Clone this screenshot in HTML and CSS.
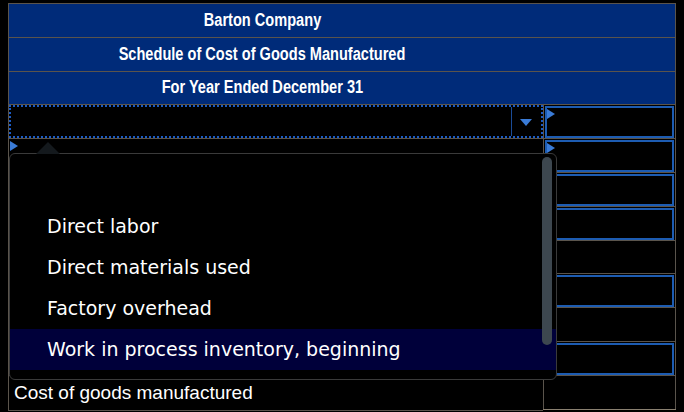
FILE: index.html
```html
<!DOCTYPE html>
<html>
<head>
<meta charset="utf-8">
<link rel="stylesheet" href="styles.css">
</head>
<body>
<div class="sheet">
  <table class="grid">
    <colgroup><col class="c1"><col class="c2"></colgroup>
    <tr class="hdr"><td colspan="2"><span class="ht">Barton Company</span></td></tr>
    <tr class="hdr"><td colspan="2"><span class="ht">Schedule of Cost of Goods Manufactured</span></td></tr>
    <tr class="hdr"><td colspan="2"><span class="ht">For Year Ended December 31</span></td></tr>
    <tr>
      <td class="sel-cell">
        <div class="select focus">
          <span class="sel-arrow"></span>
        </div>
      </td>
      <td class="val"><div class="inp"><span class="flag"></span></div></td>
    </tr>
    <tr>
      <td class="lab"><span class="flag left"></span></td>
      <td class="val"><div class="inp"><span class="flag"></span></div></td>
    </tr>
    <tr><td class="lab"></td><td class="val"><div class="inp"></div></td></tr>
    <tr><td class="lab"></td><td class="val"><div class="inp"></div></td></tr>
    <tr><td class="lab"></td><td class="val"></td></tr>
    <tr><td class="lab"></td><td class="val"><div class="inp"></div></td></tr>
    <tr><td class="lab"></td><td class="val"></td></tr>
    <tr><td class="lab"></td><td class="val"><div class="inp"></div></td></tr>
    <tr class="total"><td class="lab txt">Cost of goods manufactured</td><td class="val dbl"></td></tr>
  </table>

  <div class="dropdown">
    <span class="caret"></span>
    <ul class="list">
      <li class="opt"></li>
      <li class="opt">Direct labor</li>
      <li class="opt">Direct materials used</li>
      <li class="opt">Factory overhead</li>
      <li class="opt hl">Work in process inventory, beginning</li>
    </ul>
    <span class="thumb"></span>
  </div>
</div>
</body>
</html>
```
FILE: styles.css
```css
html, body {
  margin: 0;
  padding: 0;
  background: #000;
}
.sheet {
  position: relative;
  margin: 3px 0 0 8px;
  width: 667px;
}
.grid {
  border-collapse: collapse;
  width: 667px;
  table-layout: fixed;
  font-family: "Liberation Sans", Arial, sans-serif;
  color: #fff;
}
.c1 { width: 535px; }
.c2 { width: 132px; }
.grid td {
  border: 1px solid #5a544c;
  height: 32.8px;
  padding: 0;
  position: relative;
}
.hdr td {
  background: #002b79;
  text-align: center;
  font-weight: bold;
  font-size: 18px;
  padding-right: 160px;
}
.ht {
  display: inline-block;
  transform: scaleX(0.81);
  transform-origin: center;
}
.select {
  position: absolute;
  inset: 0;
  border: 2px dotted #1b5bc4;
}
.sel-arrow {
  position: absolute;
  right: 0;
  top: 0;
  bottom: 0;
  width: 29px;
  border-left: 1px solid #1b4c98;
}
.sel-arrow::after {
  content: "";
  position: absolute;
  left: 8px;
  top: 12px;
  border-left: 6px solid transparent;
  border-right: 6px solid transparent;
  border-top: 7px solid #3a7bd6;
}
.inp {
  position: absolute;
  inset: 1px 1px 0 1px;
  border: 2px solid #1d5cb2;
}
.flag {
  position: absolute;
  left: 0;
  top: 1px;
  border-top: 5px solid transparent;
  border-bottom: 5px solid transparent;
  border-left: 8px solid #3a7bd6;
}
.flag.left {
  left: 1px;
  top: 2px;
}
.txt {
  font-size: 19px;
  padding-left: 5px !important;
}
.dbl {
  border-bottom: 4px double #8a8070 !important;
}
.dropdown {
  position: absolute;
  left: 1px;
  top: 150px;
  width: 546px;
  height: 225px;
  border: 1px solid #3a3a3a;
  border-radius: 6px;
  background: #000;
  font-family: "DejaVu Sans", Verdana, sans-serif;
  color: #fff;
  font-size: 19px;
}
.caret {
  position: absolute;
  left: 26px;
  top: -12px;
  border-left: 12px solid transparent;
  border-right: 12px solid transparent;
  border-bottom: 12px solid #14191d;
}
.list {
  list-style: none;
  margin: 0;
  padding: 11px 0 0 0;
}
.opt {
  height: 41px;
  line-height: 40px;
  padding-left: 37px;
}
.opt.hl {
  background: #00003a;
}
.thumb {
  position: absolute;
  right: 4px;
  top: 3px;
  width: 10px;
  height: 188px;
  border-radius: 5px;
  background: #3d474f;
}
```
